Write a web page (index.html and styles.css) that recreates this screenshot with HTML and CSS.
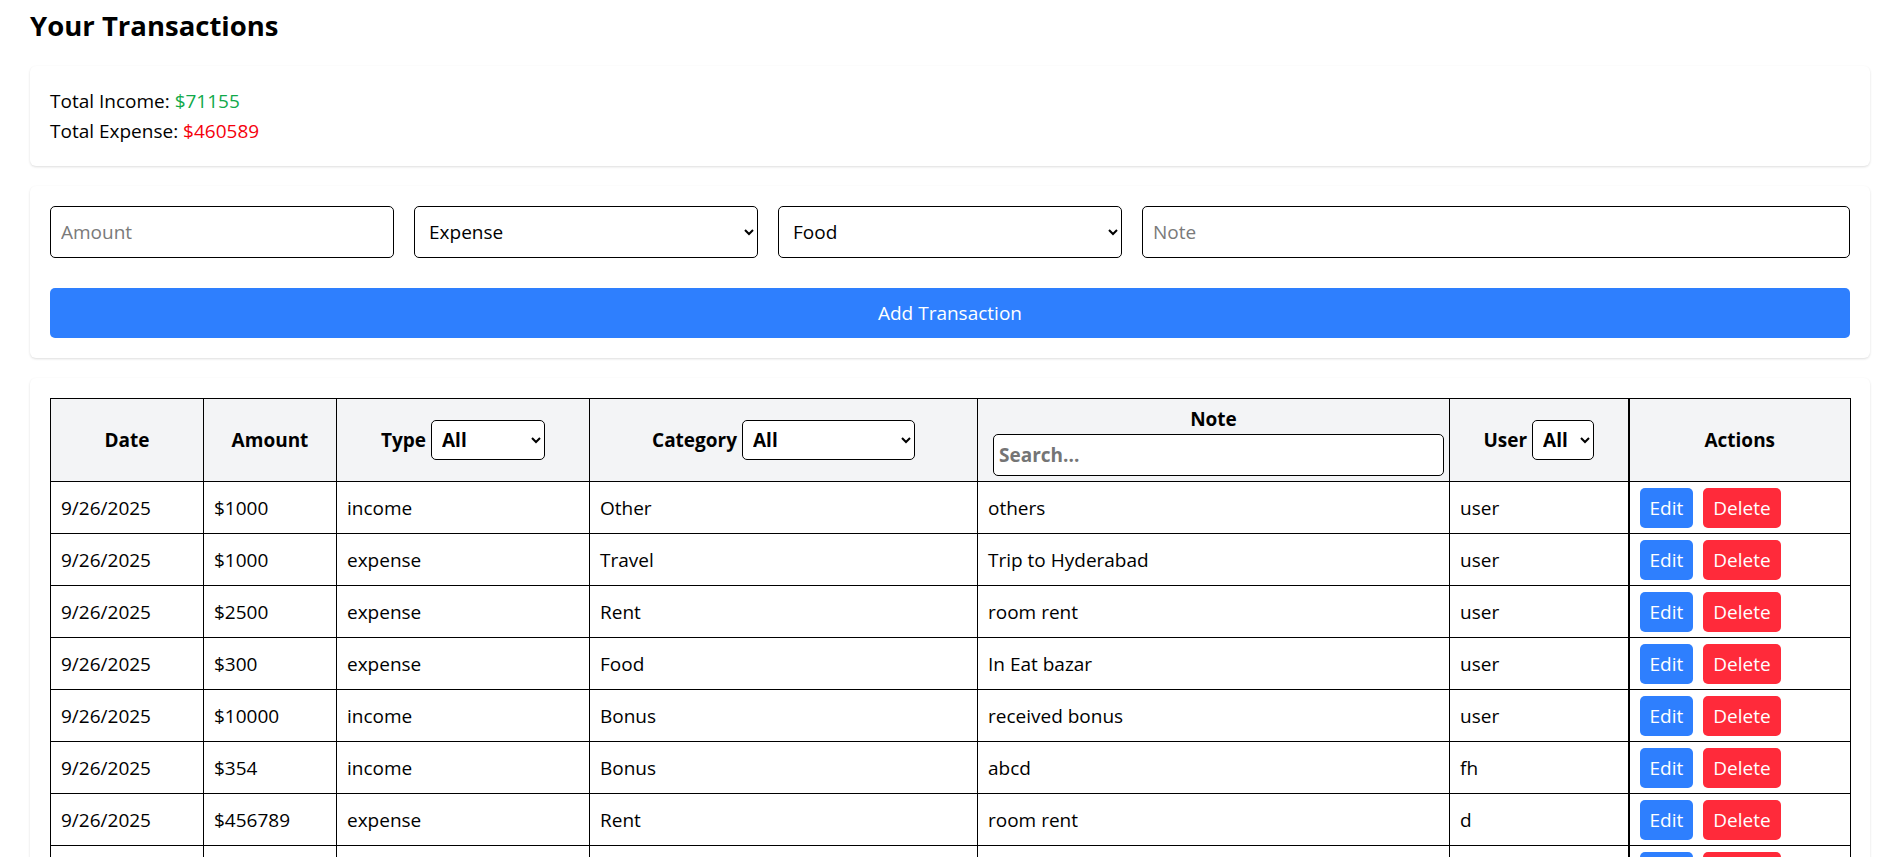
FILE: index.html
```html
<!DOCTYPE html>
<html lang="en">
<head>
<meta charset="utf-8">
<title>Your Transactions</title>
<link rel="stylesheet" href="styles.css">
</head>
<body>
<main class="page">
  <h1 class="title">Your Transactions</h1>

  <section class="card totals">
    <p>Total Income: <span class="income">$71155</span></p>
    <p>Total Expense: <span class="expense">$460589</span></p>
  </section>

  <section class="card form-card">
    <div class="form-grid">
      <input class="field" type="text" placeholder="Amount">
      <select class="field">
        <option>Expense</option>
        <option>Income</option>
      </select>
      <select class="field">
        <option>Food</option>
        <option>Travel</option>
        <option>Rent</option>
        <option>Bonus</option>
        <option>Other</option>
      </select>
      <input class="field note-field" type="text" placeholder="Note">
    </div>
    <button class="add-btn" type="button">Add Transaction</button>
  </section>

  <section class="card table-card">
    <table class="tx-table">
      <colgroup>
        <col class="c-date">
        <col class="c-amount">
        <col class="c-type">
        <col class="c-cat">
        <col class="c-note">
        <col class="c-user">
        <col class="c-act">
      </colgroup>
      <thead>
        <tr>
          <th>Date</th>
          <th>Amount</th>
          <th>Type <select class="hsel w-type"><option>All</option><option>income</option><option>expense</option></select></th>
          <th>Category <select class="hsel w-cat"><option>All</option><option>Food</option><option>Travel</option></select></th>
          <th class="note-th"><div>Note</div><input class="search" type="text" placeholder="Search..."></th>
          <th>User <select class="hsel w-user"><option>All</option></select></th>
          <th class="act-cell">Actions</th>
        </tr>
      </thead>
      <tbody>
        <tr><td>9/26/2025</td><td>$1000</td><td>income</td><td>Other</td><td>others</td><td>user</td><td class="act-cell"><div class="acts"><button class="btn edit">Edit</button><button class="btn del">Delete</button></div></td></tr>
        <tr><td>9/26/2025</td><td>$1000</td><td>expense</td><td>Travel</td><td>Trip to Hyderabad</td><td>user</td><td class="act-cell"><div class="acts"><button class="btn edit">Edit</button><button class="btn del">Delete</button></div></td></tr>
        <tr><td>9/26/2025</td><td>$2500</td><td>expense</td><td>Rent</td><td>room rent</td><td>user</td><td class="act-cell"><div class="acts"><button class="btn edit">Edit</button><button class="btn del">Delete</button></div></td></tr>
        <tr><td>9/26/2025</td><td>$300</td><td>expense</td><td>Food</td><td>In Eat bazar</td><td>user</td><td class="act-cell"><div class="acts"><button class="btn edit">Edit</button><button class="btn del">Delete</button></div></td></tr>
        <tr><td>9/26/2025</td><td>$10000</td><td>income</td><td>Bonus</td><td>received bonus</td><td>user</td><td class="act-cell"><div class="acts"><button class="btn edit">Edit</button><button class="btn del">Delete</button></div></td></tr>
        <tr><td>9/26/2025</td><td>$354</td><td>income</td><td>Bonus</td><td>abcd</td><td>fh</td><td class="act-cell"><div class="acts"><button class="btn edit">Edit</button><button class="btn del">Delete</button></div></td></tr>
        <tr><td>9/26/2025</td><td>$456789</td><td>expense</td><td>Rent</td><td>room rent</td><td>d</td><td class="act-cell"><div class="acts"><button class="btn edit">Edit</button><button class="btn del">Delete</button></div></td></tr>
        <tr><td>9/25/2025</td><td>$500</td><td>expense</td><td>Food</td><td>lunch</td><td>user</td><td class="act-cell"><div class="acts"><button class="btn edit">Edit</button><button class="btn del">Delete</button></div></td></tr>
      </tbody>
    </table>
  </section>
</main>
</body>
</html>
```

FILE: styles.css
```css
* { box-sizing: border-box; }

html, body {
  margin: 0;
  background: #ffffff;
}

body {
  font-family: "Open Sans", "Noto Sans", sans-serif;
  font-size: 19px;
  line-height: 30px;
  color: #000;
}

.page {
  padding: 6px 33px 40px 30px;
}

.title {
  margin: 0 0 20px 0;
  font-size: 27.5px;
  line-height: 40px;
  font-weight: 700;
}

.card {
  background: #fff;
  border-radius: 6px;
  box-shadow: 0 1px 3px rgba(0,0,0,0.09), 0 1px 2px rgba(0,0,0,0.05);
  padding: 20px;
  margin-bottom: 20px;
}

.totals p {
  margin: 0;
}

.income { color: #10a94a; }
.expense { color: #f5000c; }

.form-grid {
  display: grid;
  grid-template-columns: repeat(5, 1fr);
  gap: 20px;
}

.field {
  font: inherit;
  height: 52px;
  padding: 10px;
  border: 1px solid #000;
  border-radius: 5px;
  background: #fff;
  color: #000;
  width: 100%;
}

.field::placeholder { color: #7a7a7a; }

.note-field { grid-column: span 2; }

.add-btn {
  display: block;
  width: 100%;
  margin-top: 30px;
  height: 50px;
  font: inherit;
  color: #fff;
  background: #2e7ffe;
  border: none;
  border-radius: 5px;
}

.tx-table {
  width: 100%;
  border-collapse: collapse;
  table-layout: fixed;
}

.c-date { width: 153px; }
.c-amount { width: 133px; }
.c-type { width: 253px; }
.c-cat { width: 388px; }
.c-note { width: 472px; }
.c-user { width: 179px; }
.c-act { width: 222px; }

.tx-table th,
.tx-table td {
  border: 1px solid #000;
  padding: 5px 10px;
  vertical-align: middle;
}

.tx-table th {
  background: #f3f4f6;
  font-weight: 700;
  text-align: center;
  white-space: nowrap;
}

.tx-table td {
  text-align: left;
  height: 52px;
}

.act-cell { border-left-width: 2px !important; }

.hsel {
  font: inherit;
  font-weight: 700;
  height: 40px;
  padding: 0 6px;
  border: 1px solid #000;
  border-radius: 5px;
  background: #fff;
  color: #000;
  vertical-align: baseline;
}

.w-type { width: 114px; }
.w-cat { width: 173px; }
.w-user { width: 62px; }

.search {
  display: block;
  width: 100%;
  height: 42px;
  margin-left: 5px;
  font: inherit;
  font-weight: 700;
  padding: 4px 5px;
  border: 1px solid #000;
  border-radius: 5px;
  background: #fff;
}

.search::placeholder { color: #757575; }

.acts {
  display: flex;
  gap: 10px;
}

.btn {
  font: inherit;
  height: 40px;
  padding: 0 10px;
  border: none;
  border-radius: 5px;
  color: #fff;
}

.edit { background: #2e7ffe; }
.del { background: #ff2a3a; }
```
